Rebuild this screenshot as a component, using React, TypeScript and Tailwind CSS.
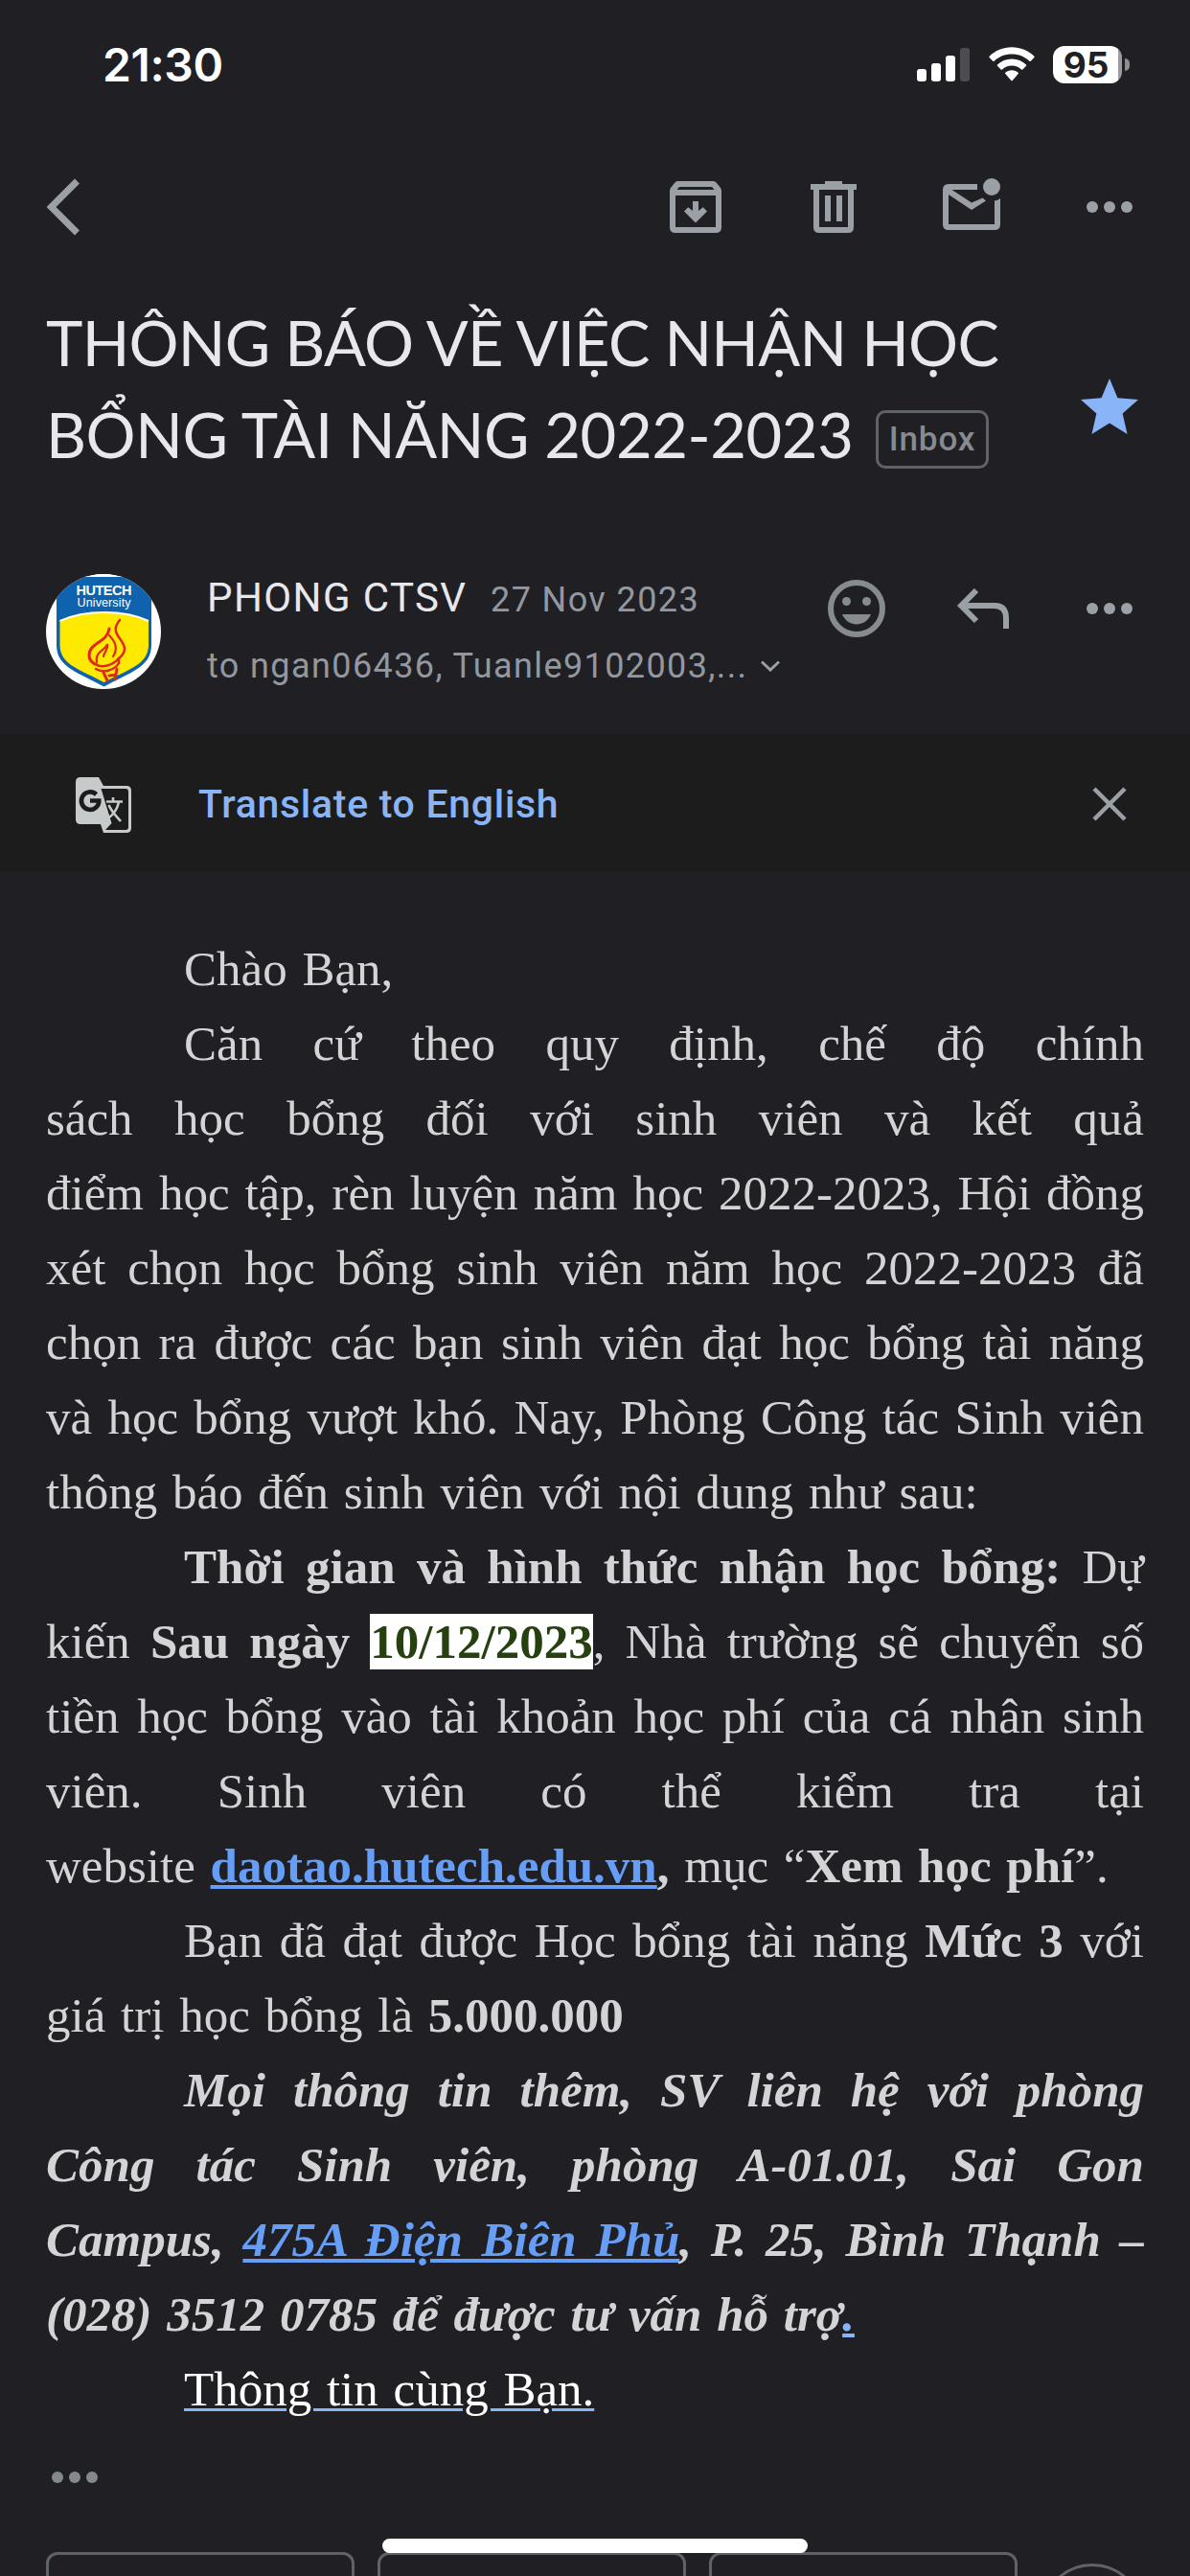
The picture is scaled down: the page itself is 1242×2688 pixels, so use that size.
import type { ReactNode } from "react";

const GREY = "#9aa0a6";

function StatusBar() {
  return (
    <div className="flex h-[135px] shrink-0 items-start pt-[48px] pr-[63px] pl-[107px] text-white">
      <div className="-mt-[10px] flex-1 font-[Inter] text-[48px] leading-[60px] font-semibold tracking-[-0.4px]">21:30</div>
      <svg className="mt-[2px] mr-[20px]" width="55" height="35" viewBox="0 0 55 35" fill="#fff">
        <rect x="0" y="22" width="10" height="13" rx="3" />
        <rect x="15" y="16" width="10" height="19" rx="3" />
        <rect x="30" y="8" width="10" height="27" rx="3" />
        <rect x="45" y="0" width="10" height="35" rx="3" fill="#4d4d50" />
      </svg>
      <svg className="mt-[1px] mr-[19px]" width="48" height="36" viewBox="0 0 48 36" fill="#fff">
        <path d="M24 0.3C33 0.3 41.300 3.800 47.400 9.700Q48 10.400 47.400 11.100L43.800 14.700Q43.100 15.300 42.400 14.700C37.600 10.100 31.200 7.500 24 7.500S10.400 10.100 5.600 14.700Q4.900 15.300 4.200 14.700L0.600 11.100Q0 10.400 0.600 9.700C6.700 3.800 15 0.300 24 0.300Z" />
        <path d="M24 12.500C29.800 12.500 35 14.700 39 18.400Q39.700 19.100 39 19.800L35.400 23.400Q34.700 24 34 23.400C31.300 21 27.900 19.600 24 19.600S16.700 21 14 23.400Q13.300 24 12.600 23.400L9 19.800Q8.300 19.100 9 18.400C13 14.700 18.200 12.500 24 12.500Z" />
        <path d="M24 24.300C26.600 24.300 28.900 25.200 30.700 26.700Q31.400 27.400 30.700 28.100L24.700 34.900Q24 35.500 23.300 34.900L17.300 28.100Q16.600 27.400 17.300 26.700C19.100 25.200 21.400 24.300 24 24.300Z" />
      </svg>
      <div className="flex h-[39px] w-[72px] items-center justify-center rounded-[12px] bg-[linear-gradient(to_right,#fff_68px,#9c9c9e_68px)] pr-[3px] font-[Inter] text-[37px] leading-none font-bold text-[#202024]">
        95
      </div>
      <div className="mt-[13px] ml-[3px] h-[13px] w-[5px] rounded-r-full bg-[#8e8e90]" />
    </div>
  );
}

function Dots({ className = "", color = GREY }: { className?: string; color?: string }) {
  return (
    <svg className={className} width="48" height="12" viewBox="0 0 48 12" fill={color}>
      <circle cx="6" cy="6" r="6" />
      <circle cx="24" cy="6" r="6" />
      <circle cx="42" cy="6" r="6" />
    </svg>
  );
}

function Toolbar() {
  return (
    <div className="flex h-[162px] shrink-0 items-center pr-[60px] pl-[48px]">
      <svg className="mr-auto" width="36" height="60" viewBox="0 0 36 60" fill="none" stroke={GREY} strokeWidth="7">
        <path d="M32.500 3L5.500 30L32.500 57" />
      </svg>
      <svg className="mr-[93px]" width="54" height="54" viewBox="0 0 54 54">
        <path fill={GREY} fillRule="evenodd" d="M8.500 0H45.500Q47.500 0 49 2L53 7Q54 8.500 54 10.500V48Q54 54 48 54H6Q0 54 0 48V10.500Q0 8.500 1 7L5 2Q6.500 0 8.500 0ZM10 6L7.500 9H46.500L44 6ZM6 15V48H48V15Z" />
        <path fill={GREY} d="M24 21H30V31L34.800 27.200L39 31.500L27 43.500L15 31.500L19.200 27.200L24 31Z" />
      </svg>
      <svg className="mr-[90px]" width="48" height="54" viewBox="0 0 48 54" fill={GREY}>
        <path fillRule="evenodd" d="M15 0H33V3H48V9H45V48Q45 54 39 54H9Q3 54 3 48V9H0V3H15ZM9 9V48H39V9Z" />
        <path d="M15 15H21V42H15ZM27 15H33V42H27Z" />
      </svg>
      <svg className="mr-[90px]" width="60" height="60" viewBox="0 0 60 60" fill={GREY}>
        <circle cx="51" cy="9" r="9" />
        <path d="M6 6H36V12H9.500L30 25.500L41.500 20.500L45 23.500L30 33L6 17V48H54V23.500Q57.500 23 60 21V48Q60 54 54 54H6Q0 54 0 48V12Q0 6 6 6Z" />
      </svg>
      <Dots />
    </div>
  );
}

function Title() {
  return (
    <div className="flex h-[245px] shrink-0 items-start pl-[48px] text-[#e8e8ec]">
      <div className="w-[1080px] font-[Lato] text-[65px] leading-[96px] whitespace-nowrap">
        <div className="mt-[12px] tracking-[-0.75px]">THÔNG BÁO VỀ VIỆC NHẬN HỌC</div>
        <div className="flex">
          <span className="w-[866px] tracking-[-0.4px]">BỔNG TÀI NĂNG 2022-2023</span>
          <span className="mt-[23px] flex h-[61px] w-[118px] items-center justify-center rounded-[10px] border-3 border-[#5f6368] font-[Roboto] text-[35px] font-medium tracking-[0.9px] text-[#868b90]">
            Inbox
          </span>
        </div>
      </div>
      <svg className="mt-[98px]" width="60" height="58" viewBox="2 2 20 19" preserveAspectRatio="none" fill="#8ab4f8">
        <path d="M12 17.270L18.180 21l-1.640-7.030L22 9.240l-7.190-.61L12 2 9.190 8.630 2 9.240l5.460 4.730L5.820 21z" />
      </svg>
    </div>
  );
}

function Avatar() {
  return (
    <svg className="mt-[57px]" width="120" height="120" viewBox="0 0 120 120">
      <defs>
        <clipPath id="disc"><circle cx="60" cy="60" r="60" /></clipPath>
      </defs>
      <g clipPath="url(#disc)">
        <rect width="120" height="120" fill="#fff" />
        <path d="M11 3H110V74C110 98 86 103 60.500 117.500C35 103 11 98 11 74Z" fill="#0e62ae" />
        <path d="M14.500 49C40 37 82 37 107 49V74C107 95 84 100 60.500 113C37 100 14.500 95 14.500 74Z" fill="#fdea00" />
        <path d="M14.500 49C40 37 82 37 107 49" fill="none" stroke="#fff" strokeWidth="2" />
        <g fill="none" stroke="#e3261b" strokeWidth="2.200" strokeLinecap="round">
          <path d="M66 57C64 72 45 71 45 85C45 90 48 92 51 94" strokeWidth="3" />
          <path d="M77 48C65 62 82 68 82 78C82 84 78 86 75 89" strokeWidth="2.500" />
          <path d="M53 92C51 80 62 80 64 73C65 80 60 82 60 86" />
          <path d="M66 64C74 72 74 80 70 86" />
          <path d="M52 94C58 99 70 95 76 88M52 99C60 104 72 100 76 93V88" strokeWidth="2.500" />
          <path d="M60 103L64 111M74 99L72 110M66 106L73 105" strokeWidth="3" />
        </g>
        <rect width="120" height="3" fill="#fff" />
        <text x="60.500" y="22" textAnchor="middle" textLength="58" fontFamily="Liberation Sans" fontWeight="700" fontSize="14.500" fill="#fff">HUTECH</text>
        <text x="60.500" y="34" textAnchor="middle" textLength="56" fontFamily="Liberation Sans" fontSize="12.500" fill="#fff">University</text>
      </g>
    </svg>
  );
}

function Sender() {
  return (
    <div className="flex h-[224px] shrink-0 items-start pr-[60px] pl-[48px] font-[Roboto] whitespace-nowrap">
      <Avatar />
      <div className="ml-[48px] w-[648px] pt-[52px]">
        <div className="flex items-baseline leading-[60px]">
          <span className="w-[296px] text-[42px] tracking-[1.400px] text-[#e8e8ec]">PHONG CTSV</span>
          <span className="text-[36px] tracking-[1.400px] text-[#9398a0]">27 Nov 2023</span>
        </div>
        <div className="mt-[9px] flex items-center text-[36px] leading-[60px] tracking-[1.400px] text-[#9398a0]">
          <span className="w-[578px]">to ngan06436, Tuanle9102003,...</span>
          <svg width="20" height="12" viewBox="0 0 20 12" fill="none" stroke={GREY} strokeWidth="3">
            <path d="M1 1.500L10 10L19 1.500" />
          </svg>
        </div>
      </div>
      <svg className="mt-[63px] mr-[75px]" width="60" height="60" viewBox="0 0 60 60" fill="#868b8f">
        <circle cx="30" cy="30" r="27" fill="none" stroke="#868b8f" strokeWidth="6" />
        <circle cx="19.500" cy="22.500" r="4.500" />
        <circle cx="40.500" cy="22.500" r="4.500" />
        <path d="M15 36H45C42 43 36 46.500 30 46.500S18 43 15 36Z" />
      </svg>
      <svg className="mt-[72px] mr-[81px]" width="54" height="43" viewBox="0 0 54 43" fill="none" stroke={GREY} strokeWidth="6">
        <path d="M20 2L4.200 18L20 34M4.200 18H39Q51 18 51 31V42" />
      </svg>
      <Dots className="mt-[87px]" />
    </div>
  );
}

function TranslateBanner() {
  return (
    <div className="flex h-[143px] shrink-0 items-center bg-[#1c1c1c] pr-[66px] pl-[79px]">
      <svg width="58" height="58" viewBox="0 0 58 58" className="mt-[4px]">
        <path d="M5 0H24L29 9H53Q58 9 58 14V53Q58 58 53 58H29L26 49H5Q0 49 0 44V5Q0 0 5 0Z" fill="#c6caca" />
        <path d="M26.500 12H52Q55 12 55 15V52Q55 55 52 55H31L37.500 48Z" fill="#1c1c1c" />
        <path d="M21.500 18A9.200 9.200 0 1 0 24.300 24.500H15" fill="none" stroke="#1c1c1c" strokeWidth="4.600" />
        <g fill="none" stroke="#c6caca" strokeWidth="2.600">
          <path d="M32 25.500H49M39 21V26M45 26C43 35 38 40 33.500 43M34.500 29C38 37 43 41 47 46" />
        </g>
      </svg>
      <span className="mt-[2px] mr-auto ml-[70px] font-[Roboto] text-[41px] leading-[60px] font-medium tracking-[0.7px] text-[#8ab4f8]">Translate to English</span>
      <svg className="mt-[2px]" width="36" height="36" viewBox="0 0 36 36" fill="none" stroke={GREY} strokeWidth="4.500">
        <path d="M2 2L34 34M34 2L2 34" />
      </svg>
    </div>
  );
}

function Line({ children, indent, end }: { children: ReactNode; indent?: boolean; end?: boolean }) {
  return (
    <div className={`h-[78px] ${indent ? "pl-[144px]" : ""} ${end ? "[word-spacing:3px]" : "[text-align-last:justify]"}`}>{children}</div>
  );
}

function Body() {
  return (
    <div className="shrink-0 px-[48px] pt-[63px] font-['Liberation_Serif'] text-[51px] leading-[78px] whitespace-nowrap text-[#d4d4d6]">
      <Line indent end>Chào Bạn,</Line>
      <Line indent>Căn cứ theo quy định, chế độ chính</Line>
      <Line>sách học bổng đối với sinh viên và kết quả</Line>
      <Line>điểm học tập, rèn luyện năm học 2022-2023, Hội đồng</Line>
      <Line>xét chọn học bổng sinh viên năm học 2022-2023 đã</Line>
      <Line>chọn ra được các bạn sinh viên đạt học bổng tài năng</Line>
      <Line>và học bổng vượt khó. Nay, Phòng Công tác Sinh viên</Line>
      <Line end>thông báo đến sinh viên với nội dung như sau:</Line>
      <Line indent><b>Thời gian và hình thức nhận học bổng:</b> Dự</Line>
      <Line>
        kiến <b>Sau ngày <span className="bg-white py-px text-[#274010]">10/12/2023</span></b>, Nhà trường sẽ chuyển số
      </Line>
      <Line>tiền học bổng vào tài khoản học phí của cá nhân sinh</Line>
      <Line>viên. Sinh viên có thể kiểm tra tại</Line>
      <Line end>
        website <b><a className="text-[#669df6] underline decoration-[4px] underline-offset-[3px] [text-decoration-skip-ink:none]">daotao.hutech.edu.vn</a>,</b> mục “<b>Xem học phí</b>”.
      </Line>
      <Line indent>Bạn đã đạt được Học bổng tài năng <b>Mức 3</b> với</Line>
      <Line end>giá trị học bổng là <b>5.000.000</b></Line>
      <div className="font-bold italic">
        <Line indent>Mọi thông tin thêm, SV liên hệ với phòng</Line>
        <Line>Công tác Sinh viên, phòng A-01.01, Sai Gon</Line>
        <Line>
          Campus, <a className="text-[#669df6] underline decoration-[4px] underline-offset-[3px]">475A Điện Biên Phủ</a>, P. 25, Bình Thạnh –
        </Line>
        <Line end>
          (028) 3512 0785 để được tư vấn hỗ trợ<span className="text-[#8ab4f8] underline decoration-[4px] underline-offset-[3px]">.</span>
        </Line>
      </div>
      <Line indent end>
        <span className="text-white underline decoration-[#8ab4f8] decoration-[3px] underline-offset-[3px]">Thông tin cùng Bạn.</span>
      </Line>
    </div>
  );
}

function Footer() {
  return (
    <div className="relative min-h-0 flex-1">
      <Dots className="mt-[47px] ml-[54px]" color="#85898d" />
      <div className="mt-[72px] flex items-start gap-[24px] pl-[48px]">
        <div className="h-[132px] w-[322px] rounded-[12px] border-3 border-[#5f6368]" />
        <div className="h-[132px] w-[322px] rounded-[12px] border-3 border-[#5f6368]" />
        <div className="h-[132px] w-[322px] rounded-[12px] border-3 border-[#5f6368]" />
        <div className="mt-[12px] h-[108px] w-[108px] rounded-full border-3 border-[#5f6368]" />
      </div>
      <div className="absolute bottom-[24px] left-[399px] h-[15px] w-[444px] rounded-full bg-white" />
    </div>
  );
}

export default function App() {
  return (
    <div className="flex h-[2688px] w-[1242px] flex-col overflow-hidden bg-[#202024]">
      <StatusBar />
      <Toolbar />
      <Title />
      <Sender />
      <TranslateBanner />
      <Body />
      <Footer />
    </div>
  );
}
